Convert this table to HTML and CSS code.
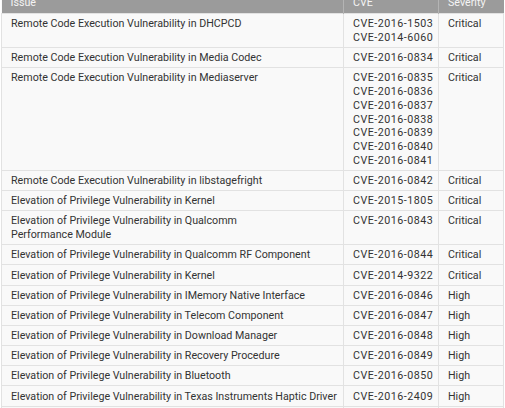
FILE: index.html
```html
<!DOCTYPE html>
<html>
<head>
<meta charset="utf-8">
<link rel="stylesheet" href="styles.css">
</head>
<body>
<table class="vt">
  <colgroup><col class="c-issue"><col class="c-cve"><col class="c-sev"></colgroup>
  <thead>
    <tr><th>Issue</th><th>CVE</th><th>Severity</th></tr>
  </thead>
  <tbody>
    <tr><td>Remote Code Execution Vulnerability in DHCPCD</td><td class="cve">CVE-2016-1503<br>CVE-2014-6060</td><td>Critical</td></tr>
    <tr><td>Remote Code Execution Vulnerability in Media Codec</td><td class="cve">CVE-2016-0834</td><td>Critical</td></tr>
    <tr><td>Remote Code Execution Vulnerability in Mediaserver</td><td class="cve">CVE-2016-0835<br>CVE-2016-0836<br>CVE-2016-0837<br>CVE-2016-0838<br>CVE-2016-0839<br>CVE-2016-0840<br>CVE-2016-0841</td><td>Critical</td></tr>
    <tr><td>Remote Code Execution Vulnerability in libstagefright</td><td class="cve">CVE-2016-0842</td><td>Critical</td></tr>
    <tr><td>Elevation of Privilege Vulnerability in Kernel</td><td class="cve">CVE-2015-1805</td><td>Critical</td></tr>
    <tr><td>Elevation of Privilege Vulnerability in Qualcomm<br>Performance Module</td><td class="cve">CVE-2016-0843</td><td>Critical</td></tr>
    <tr><td>Elevation of Privilege Vulnerability in Qualcomm RF Component</td><td class="cve">CVE-2016-0844</td><td>Critical</td></tr>
    <tr><td>Elevation of Privilege Vulnerability in Kernel</td><td class="cve">CVE-2014-9322</td><td>Critical</td></tr>
    <tr><td>Elevation of Privilege Vulnerability in IMemory Native Interface</td><td class="cve">CVE-2016-0846</td><td>High</td></tr>
    <tr><td>Elevation of Privilege Vulnerability in Telecom Component</td><td class="cve">CVE-2016-0847</td><td>High</td></tr>
    <tr><td>Elevation of Privilege Vulnerability in Download Manager</td><td class="cve">CVE-2016-0848</td><td>High</td></tr>
    <tr><td>Elevation of Privilege Vulnerability in Recovery Procedure</td><td class="cve">CVE-2016-0849</td><td>High</td></tr>
    <tr><td>Elevation of Privilege Vulnerability in Bluetooth</td><td class="cve">CVE-2016-0850</td><td>High</td></tr>
    <tr><td>Elevation of Privilege Vulnerability in Texas Instruments Haptic Driver</td><td class="cve">CVE-2016-2409</td><td>High</td></tr>
    <tr><td>&nbsp;</td><td class="cve">&nbsp;</td><td>&nbsp;</td></tr>
  </tbody>
</table>
</body>
</html>
```

FILE: styles.css
```css
html, body {
  margin: 0;
  padding: 0;
  background: #ffffff;
  overflow: hidden;
}
.vt {
  border-collapse: collapse;
  table-layout: fixed;
  width: 502px;
  margin: -7px 0 0 1px;
  font-family: Roboto, "Liberation Sans", sans-serif;
  font-size: 10.7px;
  line-height: 13.8px;
  color: #333333;
  background: #f9f9f9;
}
.c-issue { width: 342px; }
.c-cve { width: 95px; }
.c-sev { width: 65px; }
.vt th {
  background: #9b9b9b;
  color: #f4f4f4;
  font-weight: normal;
  text-align: left;
  padding: 3px 9px;
  border-right: 1px solid #b4b4b4;
  height: 13px;
  white-space: nowrap;
  overflow: hidden;
}
.vt th:last-child { border-right: none; }
.vt td {
  padding: 3.2px 9px 2.2px 9px;
  vertical-align: top;
  border: 1px solid #e2e2e2;
  white-space: nowrap;
  overflow: hidden;
}
.vt td.cve { letter-spacing: 0.5px; }
```
